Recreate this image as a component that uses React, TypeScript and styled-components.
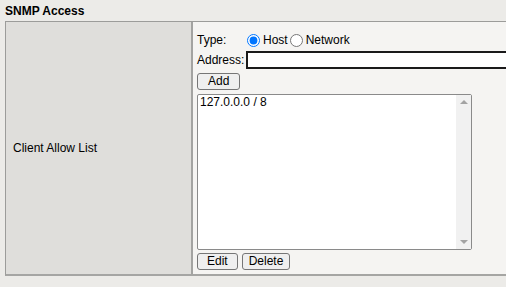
import React from "react";
import styled, { createGlobalStyle } from "styled-components";

const GlobalStyle = createGlobalStyle`
  html, body {
    margin: 0;
    padding: 0;
    background: #ecebe8;
    overflow: hidden;
  }
  body {
    font-family: "Liberation Sans", Arial, sans-serif;
    font-size: 12px;
    color: #000000;
  }
`;

const Page = styled.div`
  width: 506px;
  height: 287px;
  overflow: hidden;
`;

const Title = styled.h2`
  margin: 0;
  padding: 4px 0 0 5px;
  height: 17px;
  font-size: 12px;
  font-weight: bold;
`;

const Section = styled.div`
  display: flex;
  width: 540px;
  margin-left: 5px;
  border: 1px solid #9c9c9a;
  border-bottom-width: 2px;
  border-bottom-color: #a5a5a3;
`;

const LabelCell = styled.div`
  width: 178px;
  padding-left: 7px;
  display: flex;
  align-items: center;
  background: #dfdedb;
  border-right: 2px solid #a3a3a1;
`;

const FieldCell = styled.div`
  flex: 1;
  background: #f5f4f2;
  padding: 9px 0 4px 4px;
  display: flex;
  flex-direction: column;
`;

const Row = styled.div`
  display: flex;
  align-items: center;
  height: 18px;
`;

const FieldLabel = styled.span<{ $width: number }>`
  width: ${(p) => p.$width}px;
`;

const Radio = styled.input`
  margin: 0 3px 0 1px;
  width: 13px;
  height: 13px;
  accent-color: #0075ff;
`;

const RadioText = styled.span`
  margin-right: 1px;
`;

const TextInput = styled.input`
  flex: 1;
  height: 18px;
  box-sizing: border-box;
  border: 2px solid #1a1a1a;
  border-right: none;
  background: #ffffff;
  padding: 0 3px;
  font: inherit;
`;

const Button = styled.button<{ $pad?: number }>`
  height: 17px;
  padding: 0 ${(p) => p.$pad ?? 9}px;
  border: 1px solid #767676;
  border-radius: 3px;
  background: #efefef;
  font-family: "Liberation Sans", Arial, sans-serif;
  font-size: 12px;
  line-height: 15px;
  color: #000000;
`;

const ListBox = styled.div`
  margin-top: 4px;
  width: 275px;
  height: 156px;
  box-sizing: border-box;
  display: flex;
  background: #ffffff;
  border: 1px solid #8a8a8a;
  border-radius: 2px;
`;

const ListItems = styled.div`
  flex: 1;
  padding: 0 2px;
  line-height: 14px;
`;

const ScrollTrack = styled.div`
  width: 15px;
  background: #f1f1f1;
  display: flex;
  flex-direction: column;
  justify-content: space-between;
  align-items: center;
  padding: 5px 0;
`;

const Arrow = styled.div<{ $up?: boolean }>`
  width: 0;
  height: 0;
  border-left: 4px solid transparent;
  border-right: 4px solid transparent;
  ${(p) =>
    p.$up
      ? "border-bottom: 4px solid #a3a3a3;"
      : "border-top: 4px solid #a3a3a3;"}
`;

const ButtonRow = styled.div`
  display: flex;
  gap: 4px;
  margin-top: 3px;
`;

export default function App() {
  return (
    <Page>
      <GlobalStyle />
      <Title>SNMP Access</Title>
      <Section>
        <LabelCell>Client Allow List</LabelCell>
        <FieldCell>
          <Row>
            <FieldLabel $width={49}>Type:</FieldLabel>
            <Radio type="radio" name="type" defaultChecked />
            <RadioText>Host</RadioText>
            <Radio type="radio" name="type" />
            <RadioText>Network</RadioText>
          </Row>
          <Row style={{ marginTop: 2 }}>
            <FieldLabel $width={49}>Address:</FieldLabel>
            <TextInput type="text" />
          </Row>
          <Row style={{ marginTop: 3 }}>
            <Button $pad={10}>Add</Button>
          </Row>
          <ListBox>
            <ListItems>127.0.0.0 / 8</ListItems>
            <ScrollTrack>
              <Arrow $up />
              <Arrow />
            </ScrollTrack>
          </ListBox>
          <ButtonRow>
            <Button $pad={9}>Edit</Button>
            <Button $pad={6}>Delete</Button>
          </ButtonRow>
        </FieldCell>
      </Section>
    </Page>
  );
}
